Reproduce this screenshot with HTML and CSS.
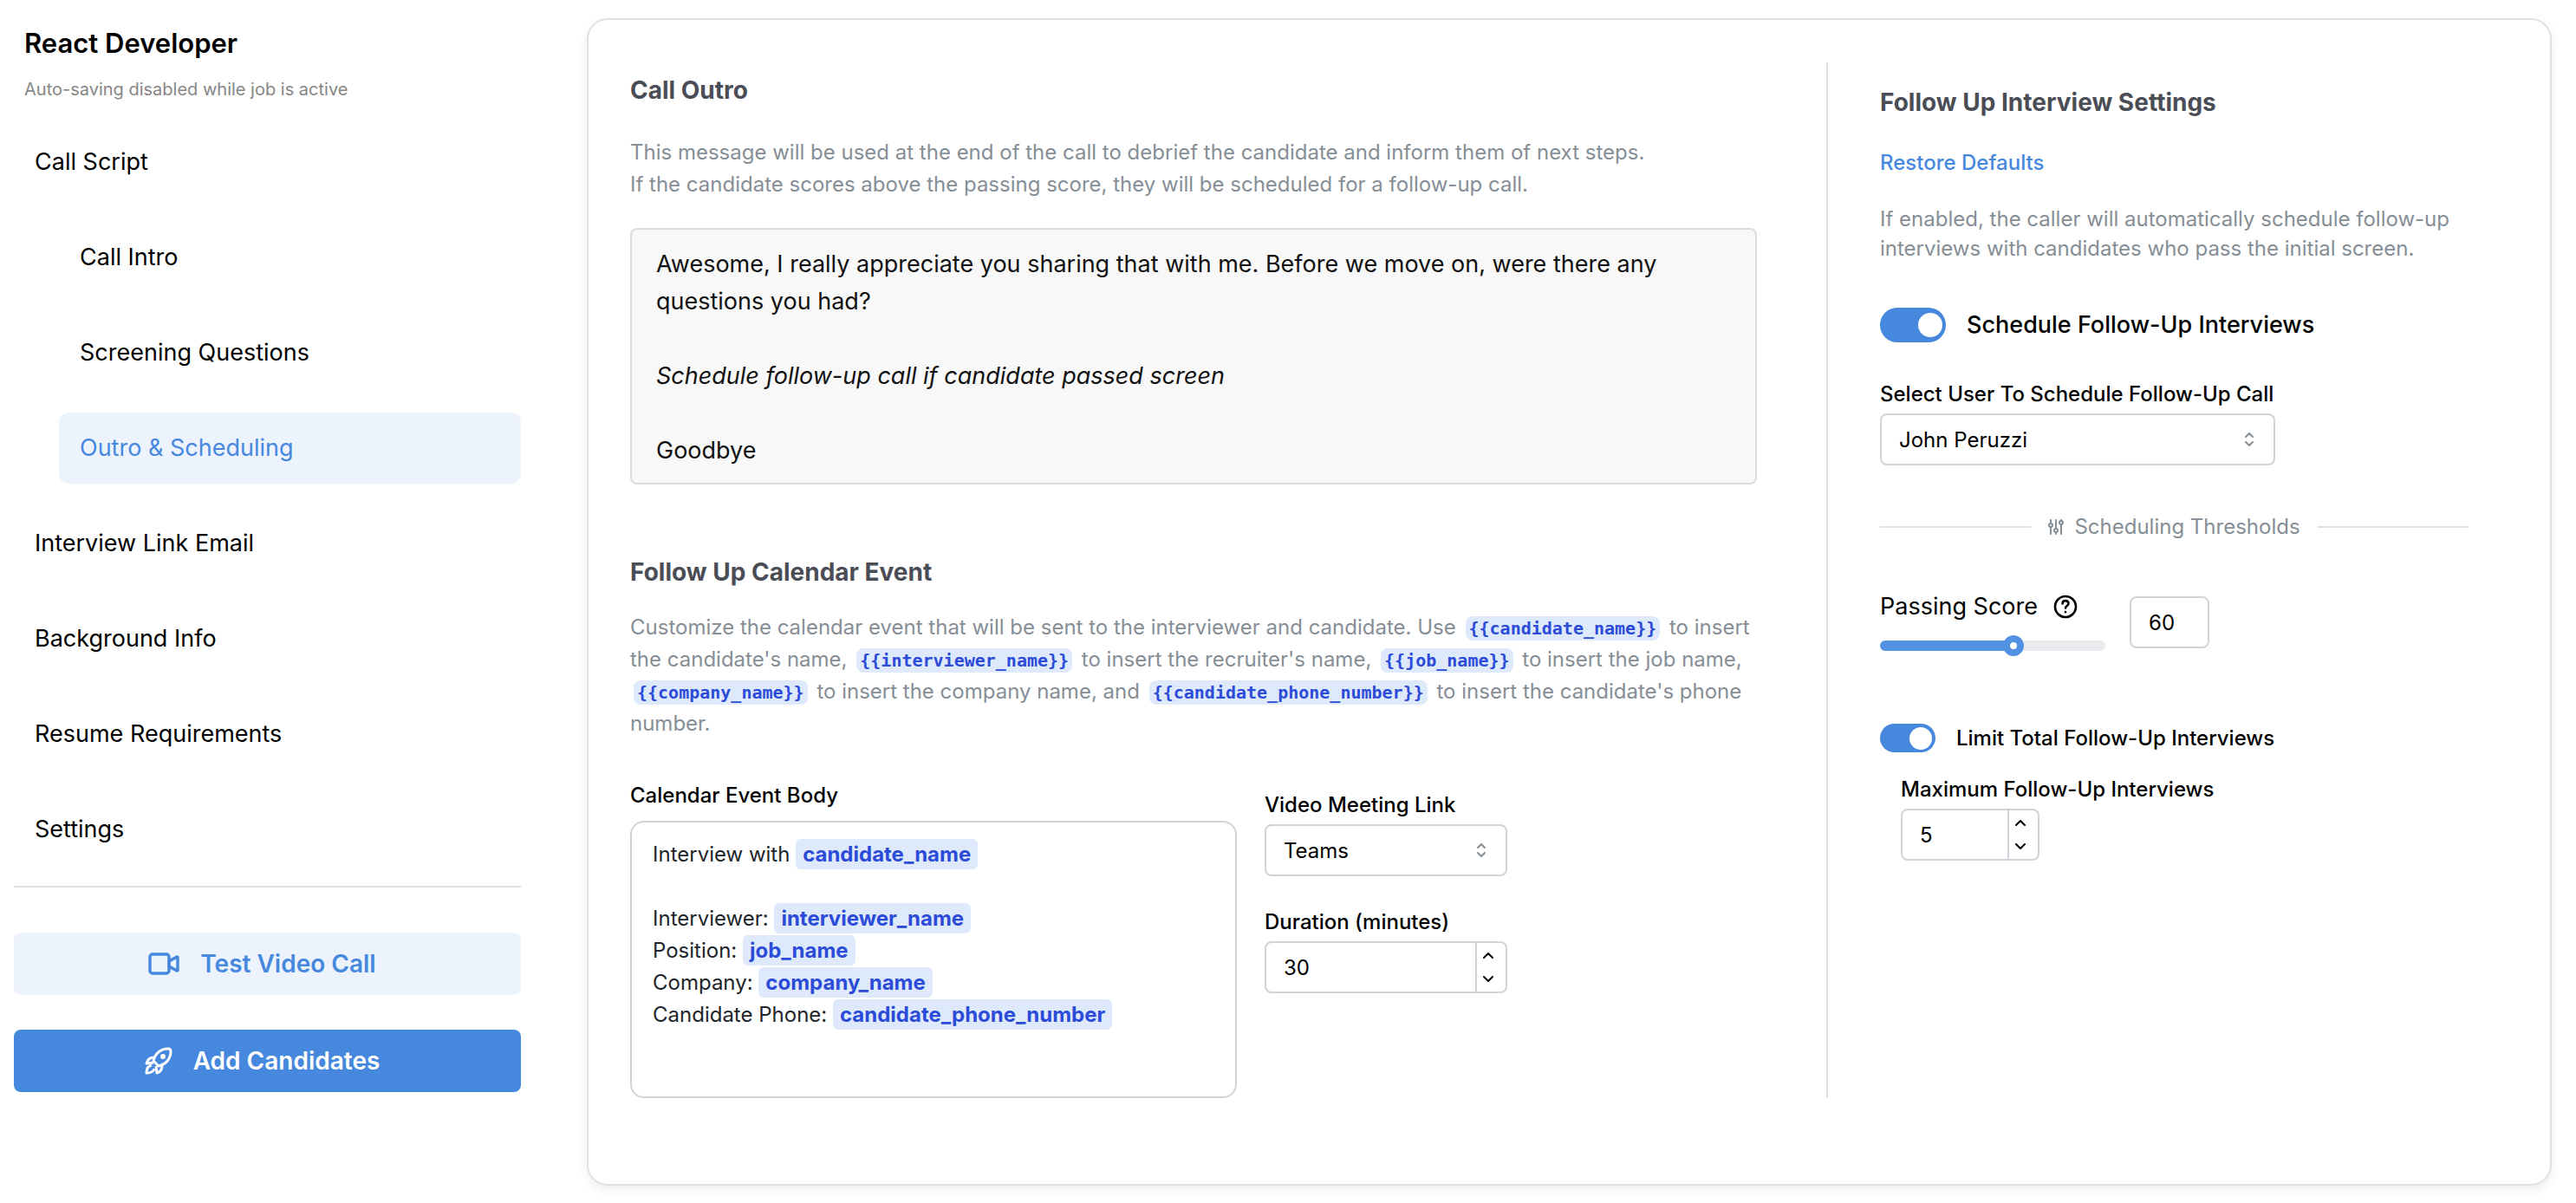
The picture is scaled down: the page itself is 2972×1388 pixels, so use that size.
FILE: index.html
```html
<!DOCTYPE html>
<html lang="en">
<head>
<meta charset="utf-8">
<title>React Developer - Outro &amp; Scheduling</title>
<meta name="viewport" content="width=device-width, initial-scale=1">
<link rel="stylesheet" href="styles.css">
</head>
<body>
<div class="app">
  <aside class="sidebar">
    <h1 class="job-title">React Developer</h1>
    <p class="save-note">Auto-saving disabled while job is active</p>
    <nav class="nav">
      <a class="nav-link" href="#script">Call Script</a>
      <a class="nav-link nav-sub" href="#intro">Call Intro</a>
      <a class="nav-link nav-sub" href="#questions">Screening Questions</a>
      <a class="nav-link nav-sub is-active" href="#outro" aria-current="page">Outro &amp; Scheduling</a>
      <a class="nav-link" href="#email">Interview Link Email</a>
      <a class="nav-link" href="#background">Background Info</a>
      <a class="nav-link" href="#resume">Resume Requirements</a>
      <a class="nav-link" href="#settings">Settings</a>
    </nav>
    <div class="actions">
      <button class="btn btn-light" type="button">
        <svg class="icon-video" viewBox="0 0 36 26" fill="none" stroke="currentColor" stroke-width="3.4" stroke-linejoin="round"><rect x="2" y="2" width="22" height="22" rx="3"/><path d="M24 10l9-5c1 0 1 0 1 1v14c0 1 0 1-1 1l-9-5z"/></svg>
        Test Video Call
      </button>
      <button class="btn btn-primary" type="button">
        <svg class="icon-rocket" viewBox="0 0 32 32" fill="none" stroke="currentColor" stroke-width="3" stroke-linejoin="round"><path d="M10 16C12 7 19 2 27 2c2 0 3 1 3 3 0 8-5 15-14 17l-6-6z"/><path d="M11 12C6 12 3 15 2 19l8-1M20 21c0 5-2 8-6 9l-1-8M8 21c-5 1-6 5-6 9 4 0 8-1 9-5"/><circle cx="21" cy="11" r="2" fill="currentColor" stroke-width="2"/></svg>
        Add Candidates
      </button>
    </div>
  </aside>

  <main class="card">
    <div class="content">
      <section class="outro">
        <h2 class="heading">Call Outro</h2>
        <p class="hint">This message will be used at the end of the call to debrief the candidate and inform them of next steps.<br>If the candidate scores above the passing score, they will be scheduled for a follow-up call.</p>
        <div class="script-box">
          <p>Awesome, I really appreciate you sharing that with me. Before we move on, were there any questions you had?</p>
          <p><em>Schedule follow-up call if candidate passed screen</em></p>
          <p>Goodbye</p>
        </div>
      </section>

      <section class="calendar">
        <h2 class="heading">Follow Up Calendar Event</h2>
        <p class="hint">Customize the calendar event that will be sent to the interviewer and candidate. Use <code>{{candidate_name}}</code> to insert the candidate's name, <code>{{interviewer_name}}</code> to insert the recruiter's name, <code>{{job_name}}</code> to insert the job name, <code>{{company_name}}</code> to insert the company name, and <code>{{candidate_phone_number}}</code> to insert the candidate's phone number.</p>
        <div class="event-row">
          <div class="event-body">
            <span class="label" id="body-label">Calendar Event Body</span>
            <div class="editor" role="textbox" aria-multiline="true" aria-labelledby="body-label" contenteditable="true" spellcheck="false"><p>Interview with <span class="tag">candidate_name</span></p><p><br></p><p>Interviewer: <span class="tag">interviewer_name</span></p><p>Position: <span class="tag">job_name</span></p><p>Company: <span class="tag">company_name</span></p><p>Candidate Phone: <span class="tag">candidate_phone_number</span></p></div>
          </div>
          <div class="event-side">
            <div class="field">
              <label class="label" for="link">Video Meeting Link</label>
              <div class="control">
                <select class="input" id="link"><option>Teams</option></select>
                <svg class="updown" viewBox="0 0 12 18" fill="none" stroke="currentColor" stroke-width="2" stroke-linecap="round" stroke-linejoin="round"><path d="M2 6l4-4 4 4M2 12l4 4 4-4"/></svg>
              </div>
            </div>
            <div class="field">
              <label class="label" for="duration">Duration (minutes)</label>
              <div class="control">
                <input class="input" id="duration" type="text" inputmode="numeric" value="30">
                <div class="stepper">
                  <button type="button" aria-label="Increase duration"><svg viewBox="0 0 14 8"><path d="M2 7l5-5 5 5"/></svg></button>
                  <button type="button" aria-label="Decrease duration"><svg viewBox="0 0 14 8"><path d="M2 1l5 5 5-5"/></svg></button>
                </div>
              </div>
            </div>
          </div>
        </div>
      </section>
    </div>

    <section class="settings">
      <h2 class="heading">Follow Up Interview Settings</h2>
      <a class="restore" href="#restore">Restore Defaults</a>
      <p class="hint hint-tight">If enabled, the caller will automatically schedule follow-up interviews with candidates who pass the initial screen.</p>
      <label class="toggle toggle-lg"><input type="checkbox" role="switch" checked>Schedule Follow-Up Interviews</label>
      <div class="field user-field">
        <label class="label" for="user">Select User To Schedule Follow-Up Call</label>
        <div class="control">
          <select class="input" id="user"><option>John Peruzzi</option></select>
          <svg class="updown" viewBox="0 0 12 18" fill="none" stroke="currentColor" stroke-width="2" stroke-linecap="round" stroke-linejoin="round"><path d="M2 6l4-4 4 4M2 12l4 4 4-4"/></svg>
        </div>
      </div>
      <div class="divider">
        <svg class="icon-sliders" viewBox="0 0 18 18" fill="none" stroke="currentColor" stroke-width="2" stroke-linecap="round"><path d="M3 1v3M3 9v8M9 1v9M9 15v2M15 1v1M15 7v10"/><circle cx="3" cy="7" r="2"/><circle cx="9" cy="13" r="2"/><circle cx="15" cy="4" r="2"/></svg>
        Scheduling Thresholds
      </div>
      <div class="score">
        <div class="score-main">
          <div class="score-label">
            <label for="score">Passing Score</label>
            <svg class="icon-help" viewBox="0 0 28 28" fill="none" stroke="currentColor" stroke-width="2.6" stroke-linecap="round"><circle cx="14" cy="14" r="12"/><path d="M10.5 10.5c0-4.5 7-4.5 7 0 0 2.500-3.500 2.500-3.500 5"/><path d="M14 20v.2"/></svg>
          </div>
          <input class="slider" id="score" type="range" min="0" max="100" value="60">
        </div>
        <input class="input score-input" type="text" inputmode="numeric" value="60" aria-label="Passing score value">
      </div>
      <label class="toggle"><input type="checkbox" role="switch" checked>Limit Total Follow-Up Interviews</label>
      <div class="field max-field">
        <label class="label" for="max">Maximum Follow-Up Interviews</label>
        <div class="control">
          <input class="input" id="max" type="text" inputmode="numeric" value="5">
          <div class="stepper">
            <button type="button" aria-label="Increase maximum"><svg viewBox="0 0 14 8"><path d="M2 7l5-5 5 5"/></svg></button>
            <button type="button" aria-label="Decrease maximum"><svg viewBox="0 0 14 8"><path d="M2 1l5 5 5-5"/></svg></button>
          </div>
        </div>
      </div>
    </section>
  </main>
</div>
</body>
</html>
```
FILE: styles.css
```css
:root {
  --blue: #4688de;
  --blue-light: #ecf3fd;
  --border: #ced4da;
  --line: #dee2e6;
  --muted: #868e96;
}

* { box-sizing: border-box; }

body {
  margin: 0;
  background: #fff;
  color: #000;
  font-family: Inter, "Liberation Sans", sans-serif;
  font-size: 24px;
  line-height: 37px;
}

h1, h2, p { margin: 0; }
button, input, select { font: inherit; color: inherit; }

.app {
  display: flex;
  align-items: flex-start;
  gap: 76px;
  padding: 21px 28px 20px 16px;
}

/* Sidebar */
.sidebar {
  flex: none;
  width: 585px;
}

.job-title {
  padding: 9px 12px 0;
  font-size: 31px;
  font-weight: 600;
  line-height: 40px;
}

.save-note {
  padding: 17px 12px 0;
  color: #868686;
  font-size: 20px;
  line-height: 32px;
}

.nav {
  display: flex;
  flex-direction: column;
  gap: 28px;
  padding-bottom: 24px;
  border-bottom: 2px solid var(--line);
  margin-top: 27px;
}

.nav-link {
  padding: 20px 24px;
  border-radius: 12px;
  color: #000;
  font-size: 27px;
  line-height: 42px;
  text-decoration: none;
}

.nav-sub { margin-left: 52px; }
.is-active { background: var(--blue-light); color: var(--blue); }

.actions {
  display: flex;
  flex-direction: column;
  gap: 40px;
  padding-top: 52px;
}

.btn {
  display: flex;
  align-items: center;
  justify-content: center;
  gap: 24px;
  height: 72px;
  padding: 0 12px 0 0;
  border: 0;
  border-radius: 8px;
  font-size: 28px;
  font-weight: 600;
}

.btn-light { background: var(--blue-light); color: var(--blue); }
.btn-primary { background: var(--blue); color: #fff; }
.icon-video { width: 36px; height: 26px; }
.icon-rocket { width: 32px; height: 32px; }

/* Card */
.card {
  display: flex;
  flex: 1;
  min-width: 0;
  padding: 49px 94px 99px 48px;
  border: 2px solid var(--line);
  border-radius: 24px;
  box-shadow: 0 4px 12px rgb(0 0 0 / 8%);
}

.content {
  flex: 1;
  min-width: 0;
  padding: 11px 80px 0 0;
  border-right: 2px solid var(--line);
}

.heading {
  color: #4a4d55;
  font-size: 28px;
  font-weight: 700;
  line-height: 42px;
}

.hint { color: var(--muted); }
.outro .hint { margin-top: 32px; }

.script-box {
  display: grid;
  gap: 43px;
  margin-top: 32px;
  padding: 18px 28px 16px;
  border: 2px solid #dcdcdc;
  border-radius: 8px;
  background: #f8f8f8;
  color: #111;
  font-size: 27px;
  line-height: 43px;
}

.calendar { margin-top: 80px; }
.calendar .hint { margin-top: 24px; }

code {
  margin: 0 4px;
  padding: 2px 4px;
  border-radius: 8px;
  background: #dee9fb;
  color: #2b4bd8;
  font-family: "DejaVu Sans Mono", monospace;
  font-size: 20px;
  font-weight: 700;
  line-height: 20px;
}

.event-row {
  display: flex;
  gap: 32px;
  margin-top: 46px;
}

.event-body { flex: none; width: 700px; }

.label {
  display: block;
  font-weight: 500;
  line-height: 37px;
}

.editor {
  min-height: 320px;
  margin-top: 11px;
  padding: 18px 24px;
  border: 2px solid var(--border);
  border-radius: 16px;
  color: #212529;
}

.tag {
  padding: 3px 8px;
  border-radius: 6px;
  background: #dee9fb;
  color: #2b4bd8;
  font-weight: 700;
}

.event-side {
  display: flex;
  flex-direction: column;
  gap: 34px;
  width: 280px;
  padding-top: 11px;
}

.control {
  position: relative;
  margin-top: 4px;
}

.input {
  display: block;
  width: 100%;
  height: 60px;
  padding: 0 20px;
  border: 2px solid var(--border);
  border-radius: 8px;
  outline: 0;
  background: #fff;
  appearance: none;
}

.updown {
  position: absolute;
  top: 21px;
  right: 24px;
  width: 12px;
  height: 18px;
  color: var(--muted);
  pointer-events: none;
}

.stepper {
  position: absolute;
  top: 2px;
  right: 2px;
  bottom: 2px;
  display: grid;
  width: 35px;
  border-left: 2px solid var(--border);
}

.stepper button {
  display: grid;
  place-items: center start;
  padding: 0 0 0 6px;
  border: 0;
  background: none;
}

.stepper svg {
  width: 14px;
  height: 8px;
  fill: none;
  stroke: #000;
  stroke-width: 2;
  stroke-linecap: round;
  stroke-linejoin: round;
}

/* Follow-up settings */
.settings {
  flex: none;
  width: 739px;
  padding: 25px 0 0 60px;
}

.restore {
  display: block;
  margin-top: 32px;
  color: var(--blue);
  font-weight: 500;
  line-height: 34px;
  text-decoration: none;
}

.hint-tight { margin-top: 31px; line-height: 34px; }

.toggle {
  display: flex;
  align-items: center;
  gap: 24px;
  font-weight: 500;
}

.toggle input {
  display: flex;
  align-items: center;
  justify-content: flex-end;
  width: 64px;
  height: 33px;
  margin: 0;
  padding: 0 4px;
  border-radius: 20px;
  background: var(--blue);
  appearance: none;
}

.toggle input::before {
  width: 26px;
  height: 26px;
  border-radius: 50%;
  background: #fff;
  content: "";
}

.toggle-lg { margin-top: 51px; font-size: 27px; line-height: 40px; }
.toggle-lg input { width: 76px; height: 40px; }
.toggle-lg input::before { width: 28px; height: 28px; }

.user-field { width: 456px; margin-top: 41px; }

.divider {
  display: flex;
  align-items: center;
  gap: 12px;
  margin-top: 52px;
  color: var(--muted);
}

.divider::before,
.divider::after {
  flex: 1;
  height: 2px;
  background: var(--line);
  content: "";
}

.divider::before { margin-right: 8px; }
.divider::after { margin-left: 8px; }
.icon-sliders { width: 18px; height: 18px; }

.score {
  display: flex;
  align-items: center;
  gap: 28px;
  margin-top: 53px;
}

.score-main { width: 260px; }

.score-label {
  display: flex;
  align-items: center;
  gap: 18px;
  font-size: 27px;
  line-height: 42px;
}

.icon-help { width: 28px; height: 28px; }

.slider {
  display: block;
  width: 100%;
  height: 24px;
  margin: 12px 0 0;
  background: none;
  appearance: none;
}

.slider::-webkit-slider-runnable-track {
  height: 12px;
  border-radius: 6px;
  background: linear-gradient(to right, #5392e3 60%, #e9ebee 60%);
}

.slider::-webkit-slider-thumb {
  width: 24px;
  height: 24px;
  margin-top: -6px;
  border: 8px solid #5392e3;
  border-radius: 50%;
  background: #fff;
  appearance: none;
}

.score-input { width: 92px; }
.score + .toggle { margin-top: 76px; }

.max-field {
  width: 160px;
  margin: 22px 0 0 24px;
}

.max-field .label { white-space: nowrap; }
```
